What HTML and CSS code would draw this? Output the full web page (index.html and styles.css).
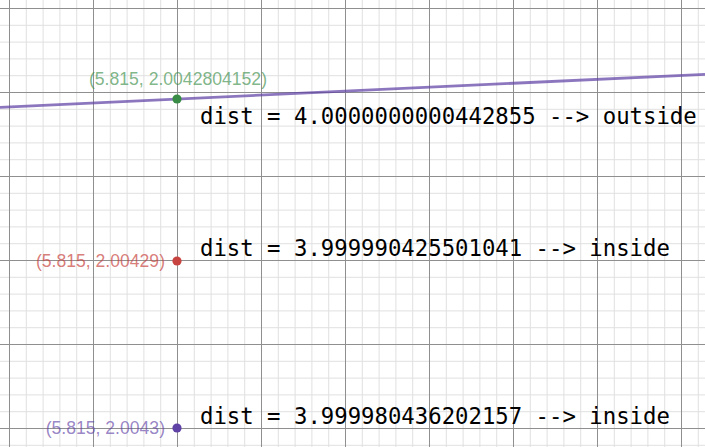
FILE: index.html
```html
<!DOCTYPE html>
<html>
<head>
<meta charset="utf-8">
<link rel="stylesheet" href="styles.css">
</head>
<body>
<div class="graph">
<svg class="canvas" width="705" height="447" viewBox="0 0 705 447">
  <path class="minor" d="M26.3 0V447M43.1 0V447M59.9 0V447M76.7 0V447M110.3 0V447M127.1 0V447M143.9 0V447M160.7 0V447M194.3 0V447M211.1 0V447M227.9 0V447M244.7 0V447M278.3 0V447M295.1 0V447M311.9 0V447M328.7 0V447M362.3 0V447M379.1 0V447M395.9 0V447M412.7 0V447M446.3 0V447M463.1 0V447M479.9 0V447M496.7 0V447M530.3 0V447M547.1 0V447M563.9 0V447M580.7 0V447M614.3 0V447M631.1 0V447M647.9 0V447M664.7 0V447M698.3 0V447
  M0 25.3H705M0 42.1H705M0 58.9H705M0 75.7H705M0 109.3H705M0 126.1H705M0 142.9H705M0 159.7H705M0 193.3H705M0 210.1H705M0 226.9H705M0 243.7H705M0 277.3H705M0 294.1H705M0 310.9H705M0 327.7H705M0 361.3H705M0 378.1H705M0 394.9H705M0 411.7H705M0 445.3H705"/>
  <path class="major" d="M9.5 0V447M93.5 0V447M177.5 0V447M261.5 0V447M345.5 0V447M429.5 0V447M513.5 0V447M597.5 0V447M681.5 0V447
  M0 8.5H705M0 92.5H705M0 176.5H705M0 260.5H705M0 344.5H705M0 428.5H705"/>
  <line class="curve" x1="0" y1="107.3" x2="705" y2="74.3"/>

  <text class="label label-green" x="178" y="85" text-anchor="middle">(5.815, 2.0042804152)</text>
  <text class="label label-red" x="165" y="267" text-anchor="end">(5.815, 2.00429)</text>
  <text class="label label-purple" x="165" y="434" text-anchor="end">(5.815, 2.0043)</text>

  <circle class="pt pt-green" cx="177" cy="99" r="4.6"/>
  <circle class="pt pt-red" cx="177" cy="261" r="4.6"/>
  <circle class="pt pt-purple" cx="177" cy="428" r="4.6"/>

  <text class="note" x="200" y="124">dist = 4.0000000000442855 --&gt; outside</text>
  <text class="note" x="200" y="256">dist = 3.999990425501041 --&gt; inside</text>
  <text class="note" x="200" y="424">dist = 3.999980436202157 --&gt; inside</text>
</svg>
</div>
</body>
</html>
```
FILE: styles.css
```css
html, body {
  margin: 0;
  padding: 0;
  background: #ffffff;
}
.graph {
  width: 705px;
  height: 447px;
  overflow: hidden;
  background: #ffffff;
}
.canvas {
  display: block;
}
.minor {
  stroke: #e0e0e0;
  stroke-width: 1;
  fill: none;
}
.major {
  stroke: #8f8f8f;
  stroke-width: 1;
  fill: none;
}
.curve {
  stroke: #6042a6;
  stroke-opacity: 0.72;
  stroke-width: 2.8;
}
.label {
  font-family: "Liberation Sans", Arial, sans-serif;
  font-size: 17.6px;
}
.label-green { fill: #388c46; fill-opacity: 0.65; }
.label-red { fill: #c74440; fill-opacity: 0.7; }
.label-purple { fill: #6042a6; fill-opacity: 0.65; }
.pt-green { fill: #388c46; }
.pt-red { fill: #c74440; }
.pt-purple { fill: #6042a6; }
.note {
  font-family: "DejaVu Sans Mono", monospace;
  font-size: 22.3px;
  fill: #000000;
}
```
